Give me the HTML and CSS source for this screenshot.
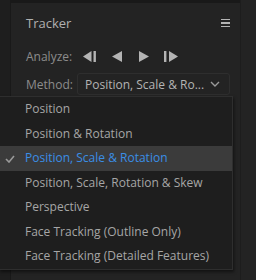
FILE: index.html
```html
<!DOCTYPE html>
<html lang="en">
<head>
<meta charset="UTF-8">
<title>Tracker</title>
<link rel="stylesheet" href="styles.css">
</head>
<body>
<div class="app">
  <div class="gutter"></div>
  <div class="panel">
    <div class="topbar"></div>
    <div class="head">
      <span class="title">Tracker</span>
      <span class="burger"><i></i><i></i><i></i></span>
    </div>
    <div class="row">
      <span class="label">Analyze:</span>
      <div class="btns">
        <svg width="14" height="11" viewBox="0 0 14 11"><path d="M0 5.5 L8.5 0 V11 Z" fill="#b4b4b4"/><rect x="10.5" y="0" width="2.4" height="11" fill="#b4b4b4"/></svg>
        <svg width="11" height="11" viewBox="0 0 11 11"><path d="M0 5.5 L10 0 V11 Z" fill="#b4b4b4"/></svg>
        <svg width="11" height="11" viewBox="0 0 11 11"><path d="M11 5.5 L1 0 V11 Z" fill="#b4b4b4"/></svg>
        <svg width="14" height="11" viewBox="0 0 14 11"><rect x="0" y="0" width="2.4" height="11" fill="#b4b4b4"/><path d="M14 5.5 L5 0 V11 Z" fill="#b4b4b4"/></svg>
      </div>
    </div>
    <div class="row">
      <span class="label">Method:</span>
      <div class="select">
        <span>Position, Scale &amp; Ro...</span>
        <svg width="10" height="6" viewBox="0 0 10 6"><path d="M1 1 L5 5 L9 1" fill="none" stroke="#9a9a9a" stroke-width="1.4"/></svg>
      </div>
    </div>
  </div>
  <div class="side"></div>
</div>
<ul class="menu">
  <li>Position</li>
  <li>Position &amp; Rotation</li>
  <li class="on"><svg class="check" width="10" height="8" viewBox="0 0 10 8"><path d="M1 4 L4 7 L9 1" fill="none" stroke="#9a9a9a" stroke-width="1.6"/></svg>Position, Scale &amp; Rotation</li>
  <li>Position, Scale, Rotation &amp; Skew</li>
  <li>Perspective</li>
  <li>Face Tracking (Outline Only)</li>
  <li>Face Tracking (Detailed Features)</li>
</ul>
</body>
</html>
```

FILE: styles.css
```css
body {
  margin: 0;
  background: #1c1c1c;
  font-family: "Open Sans", "Noto Sans", sans-serif;
  font-size: 12px;
  color: #a6a6a6;
  width: 256px;
  height: 280px;
  overflow: hidden;
  position: relative;
}
.app {
  display: flex;
  height: 280px;
}
.gutter {
  width: 10px;
  background: #1e1e1e;
  border-right: 1px solid #191919;
}
.panel {
  width: 229px;
  background: #232323;
}
.side {
  flex: 1;
  background: #232323;
  border-left: 1px solid #1d1d1d;
}
.topbar {
  height: 3px;
  background: #191919;
}
.head {
  display: flex;
  justify-content: space-between;
  align-items: center;
  padding: 11px 10px 0 15px;
  height: 18px;
}
.title {
  font-size: 13px;
  color: #b0b0b0;
}
.burger {
  display: flex;
  flex-direction: column;
  gap: 2px;
}
.burger i {
  display: block;
  width: 9px;
  height: 1.5px;
  background: #b4b4b4;
}
.row {
  display: flex;
  align-items: center;
  padding-left: 15px;
  margin-top: 8px;
}
.row:nth-child(3) { margin-top: 16px; }
.label {
  color: #8c8c8c;
  width: 51px;
}
.btns {
  display: flex;
  align-items: center;
  gap: 15px;
  padding-left: 6px;
}
.select {
  display: flex;
  justify-content: space-between;
  align-items: center;
  width: 137px;
  height: 20px;
  padding: 0 7px;
  border: 1px solid #2e2e2e;
  border-radius: 3px;
  color: #b4b4b4;
}
.select svg { margin-right: 2px; }
.menu {
  position: absolute;
  left: -1px;
  top: 96px;
  width: 232px;
  margin: 0;
  padding: 0;
  list-style: none;
  background: #1e1e1e;
  border: 1px solid #2e2e2e;
  box-shadow: 1px 2px 3px rgba(0,0,0,0.5);
}
.menu li {
  position: relative;
  height: 24.5px;
  line-height: 24px;
  padding-left: 25px;
  color: #a6a6a6;
}
.menu li.on {
  background: #3b3b3b;
  color: #3a8ee6;
}
.check {
  position: absolute;
  left: 5px;
  top: 9px;
}
```
